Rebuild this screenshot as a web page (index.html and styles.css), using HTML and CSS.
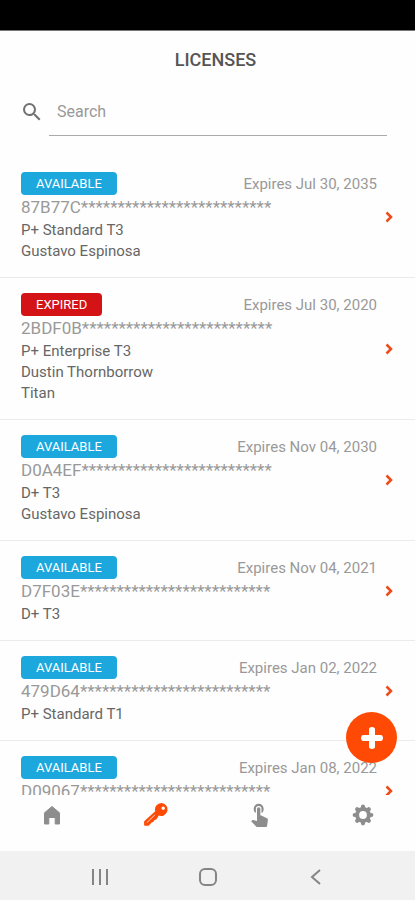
FILE: index.html
```html
<!DOCTYPE html>
<html lang="en">
<head>
<meta charset="utf-8">
<meta name="viewport" content="width=device-width, initial-scale=1">
<title>Licenses</title>
<link rel="stylesheet" href="styles.css">
</head>
<body>
<div class="status-bar"></div>
<header class="header">
  <h1 class="title">LICENSES</h1>
  <div class="search">
    <label class="search-label" for="search" aria-label="Search">
      <svg class="search-icon" viewBox="0 0 24 24"><path d="M15.5 14h-.79l-.28-.27A6.471 6.471 0 0 0 16 9.5 6.5 6.5 0 1 0 9.5 16c1.61 0 3.09-.59 4.23-1.57l.27.28v.79l5 4.99L20.49 19l-4.99-5zm-6 0C7.01 14 5 11.99 5 9.5S7.01 5 9.5 5 14 7.01 14 9.5 11.99 14 9.5 14z"/></svg>
    </label>
    <input class="search-input" id="search" type="text" placeholder="Search">
  </div>
</header>
<main class="content">
  <ul class="list">
    <li class="license">
      <div class="top"><span class="badge">AVAILABLE</span><span class="expires">Expires Jul 30, 2035</span></div>
      <div class="serial">87B77C**************************</div>
      <div class="line">P+ Standard T3</div>
      <div class="line">Gustavo Espinosa</div>
      <a class="open" href="#" aria-label="Open license"><svg viewBox="0 0 8 12"><path d="M1.5 1.5 6 6l-4.500 4.500"/></svg></a>
    </li>
    <li class="license">
      <div class="top"><span class="badge expired">EXPIRED</span><span class="expires">Expires Jul 30, 2020</span></div>
      <div class="serial">2BDF0B**************************</div>
      <div class="line">P+ Enterprise T3</div>
      <div class="line">Dustin Thornborrow</div>
      <div class="line">Titan</div>
      <a class="open" href="#" aria-label="Open license"><svg viewBox="0 0 8 12"><path d="M1.5 1.5 6 6l-4.500 4.500"/></svg></a>
    </li>
    <li class="license">
      <div class="top"><span class="badge">AVAILABLE</span><span class="expires">Expires Nov 04, 2030</span></div>
      <div class="serial">D0A4EF**************************</div>
      <div class="line">D+ T3</div>
      <div class="line">Gustavo Espinosa</div>
      <a class="open" href="#" aria-label="Open license"><svg viewBox="0 0 8 12"><path d="M1.5 1.5 6 6l-4.500 4.500"/></svg></a>
    </li>
    <li class="license">
      <div class="top"><span class="badge">AVAILABLE</span><span class="expires">Expires Nov 04, 2021</span></div>
      <div class="serial">D7F03E**************************</div>
      <div class="line">D+ T3</div>
      <a class="open" href="#" aria-label="Open license"><svg viewBox="0 0 8 12"><path d="M1.5 1.5 6 6l-4.500 4.500"/></svg></a>
    </li>
    <li class="license">
      <div class="top"><span class="badge">AVAILABLE</span><span class="expires">Expires Jan 02, 2022</span></div>
      <div class="serial">479D64**************************</div>
      <div class="line">P+ Standard T1</div>
      <a class="open" href="#" aria-label="Open license"><svg viewBox="0 0 8 12"><path d="M1.5 1.5 6 6l-4.500 4.500"/></svg></a>
    </li>
    <li class="license">
      <div class="top"><span class="badge">AVAILABLE</span><span class="expires">Expires Jan 08, 2022</span></div>
      <div class="serial">D09067**************************</div>
      <div class="line"></div>
      <a class="open" href="#" aria-label="Open license"><svg viewBox="0 0 8 12"><path d="M1.5 1.5 6 6l-4.500 4.500"/></svg></a>
    </li>
  </ul>
  <button class="add" type="button" aria-label="Add license"><svg viewBox="0 0 24 24"><path d="M12 2v20M2 12h20" stroke-width="5"/><path d="M12 4v16M4 12h16" stroke-width="6" stroke-linecap="round"/></svg></button>
</main>
<nav class="tabs">
  <a class="tab" href="#" aria-label="Home"><svg viewBox="0 0 24 24"><path d="M12 3.500 4.500 9.800V21h4.300v-6.500h6.400V21h4.300V9.800z" stroke="currentColor" stroke-linejoin="round"/></svg></a>
  <a class="tab active" href="#" aria-label="Licenses"><svg viewBox="0 0 24 24"><path fill-rule="evenodd" d="M17.500 0a6.500 6.500 0 0 0-6.300 8.200L.7 17.800a1.800 1.800 0 0 0-.6 1.300v2.600c0 .6.500 1 1.100 1h3c.5 0 .9-.2 1.200-.6l2.200-2.600 1.600-.4 1.300-2.200 1.800-.5 2.500-3.800A6.500 6.500 0 1 0 17.500 0zm1.700 3.500a1.700 1.700 0 1 1 0 3.400 1.700 1.700 0 0 1 0-3.400z"/><path d="m2.800 19.700 8-7.700" stroke="#fff" stroke-width=".8"/></svg></a>
  <a class="tab" href="#" aria-label="Activate"><svg viewBox="0 0 24 24"><path d="M9 11.240V7.500a2.500 2.500 0 0 1 5 0v3.740c1.210-.81 2-2.180 2-3.740a4.500 4.500 0 0 0-9 0c0 1.560.79 2.930 2 3.740zm9.840 4.630-4.540-2.260c-.17-.07-.35-.11-.54-.11H13v-6a1.500 1.500 0 0 0-3 0v10.740l-3.430-.72c-.08-.01-.15-.03-.24-.03-.31 0-.59.13-.79.330l-.79.800 4.940 4.940c.27.270.65.440 1.060.440h6.790c.75 0 1.330-.55 1.440-1.280l.75-5.270c.01-.07.02-.14.020-.2 0-.62-.38-1.160-.91-1.380z" transform="translate(-1.200 -2.500) scale(1.120)"/></svg></a>
  <a class="tab" href="#" aria-label="Settings"><svg viewBox="0 0 24 24"><g fill="none" stroke="currentColor"><circle cx="12" cy="12" r="5.900" stroke-width="4"/><path stroke-width="4.200" stroke-linecap="round" d="M12 4v-.3M12 20v.3M4 12h-.3M20 12h.3M6.400 6.400l-.2-.2M17.600 6.400l.2-.2M6.400 17.600l-.2.200M17.600 17.600l.2.200"/></g></svg></a>
</nav>
<footer class="system-nav">
  <button class="key" type="button" aria-label="Recent apps"><svg viewBox="0 0 18 18"><path d="M2 1v16M9 1v16M16 1v16"/></svg></button>
  <button class="key" type="button" aria-label="Home screen"><svg viewBox="0 0 18 18"><rect x="1" y="1" width="16" height="16" rx="5"/></svg></button>
  <button class="key" type="button" aria-label="Back"><svg viewBox="0 0 18 18"><path d="M13 2 5 9l8 7"/></svg></button>
</footer>
</body>
</html>
```
FILE: styles.css
```css
* {
  box-sizing: border-box;
}

body {
  margin: 0;
  height: 100vh;
  display: flex;
  flex-direction: column;
  overflow: hidden;
  background: #fefefe;
  color: #666;
  font-family: Roboto, "Liberation Sans", sans-serif;
}

button {
  padding: 0;
  border: 0;
  background: none;
}

svg {
  display: block;
}

.status-bar {
  flex: none;
  height: 31px;
  background: #000;
  border-bottom: 1px solid #777;
}

.header {
  flex: none;
  padding: 17px 28px 21px 20px;
}

.title {
  margin: 0;
  padding-left: 24px;
  text-align: center;
  font-size: 18px;
  line-height: 24px;
  font-weight: 500;
  color: #555;
}

.search {
  display: flex;
  align-items: center;
  margin-top: 16px;
  gap: 5px;
}

.search-icon {
  width: 24px;
  height: 24px;
  fill: #707070;
}

.search-input {
  flex: 1;
  min-width: 0;
  height: 48px;
  padding: 0 8px;
  border: 0;
  border-bottom: 1px solid #aaa;
  outline: 0;
  background: none;
  font: 16px Roboto, "Liberation Sans", sans-serif;
}

.search-input::placeholder {
  color: #999;
  opacity: 1;
}

.content {
  position: relative;
  flex: 1;
  min-height: 0;
}

.list {
  height: 100%;
  margin: 0;
  padding: 0;
  overflow: hidden;
  list-style: none;
}

.license {
  position: relative;
  padding: 15px 38px 15px 21px;
  border-bottom: 1px solid #ebebeb;
}

.top {
  display: flex;
  align-items: center;
  justify-content: space-between;
  height: 23px;
}

.badge {
  padding: 0 15px;
  border-radius: 4px;
  background: #1ca8dd;
  color: #fff;
  font-size: 13px;
  line-height: 23px;
}

.expired {
  background: #d41317;
}

.expires {
  font-size: 15px;
  color: #999;
}

.serial {
  font-size: 17px;
  line-height: 25px;
  color: #999;
}

.line {
  min-height: 21px;
  font-size: 15px;
  line-height: 21px;
}

.open {
  position: absolute;
  top: 0;
  bottom: 0;
  right: 22px;
  display: flex;
  align-items: center;
}

.open svg {
  width: 8px;
  height: 12px;
  fill: none;
  stroke: #f04a1a;
  stroke-width: 2.500;
}

.add {
  position: absolute;
  right: 18px;
  bottom: 32px;
  width: 51px;
  height: 51px;
  display: grid;
  place-items: center;
  border-radius: 50%;
  background: #ff4a05;
}

.add svg {
  width: 24px;
  height: 24px;
  stroke: #fff;
}

.tabs {
  flex: none;
  display: flex;
  height: 56px;
  padding-top: 8px;
}

.tab {
  flex: 1;
  display: flex;
  justify-content: center;
  color: #8d8d8d;
}

.tab svg {
  width: 24px;
  height: 24px;
  fill: currentColor;
}

.tab.active {
  color: #ff4a05;
}

.system-nav {
  flex: none;
  display: flex;
  justify-content: center;
  gap: 90px;
  height: 49px;
  padding-top: 2px;
  background: #f1f1f1;
}

.key svg {
  width: 18px;
  height: 18px;
  fill: none;
  stroke: #858585;
  stroke-width: 2;
}
```
